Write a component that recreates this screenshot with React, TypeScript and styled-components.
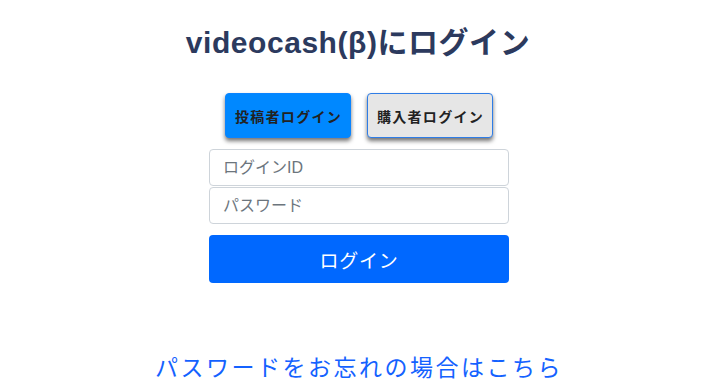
import React, { useState } from 'react';
import styled, { createGlobalStyle } from 'styled-components';

const GlobalStyle = createGlobalStyle`
  html, body {
    margin: 0;
    padding: 0;
    background: #ffffff;
  }
  body {
    font-family: 'Liberation Sans', 'Noto Sans CJK JP', sans-serif;
  }
  * {
    box-sizing: border-box;
  }
`;

const Page = styled.main`
  display: flex;
  flex-direction: column;
  align-items: center;
  padding: 22px 0 0 2px;
`;

const Title = styled.h1`
  margin: 0 2px 0 0;
  font-size: 30px;
  line-height: 42px;
  font-weight: 700;
  color: #2c3a5e;
  letter-spacing: 0.55px;
`;

const RoleSwitch = styled.div`
  display: flex;
  gap: 16px;
  margin-top: 29px;
`;

const RoleButton = styled.button<{ $active?: boolean }>`
  width: 126px;
  height: 45px;
  border-radius: 4px;
  border: 1px solid ${(p) => (p.$active ? '#0a84ff' : '#2f7de6')};
  background: ${(p) => (p.$active ? '#0088ff' : '#e6e6e6')};
  color: #222222;
  font-family: 'Liberation Sans', 'Noto Sans CJK JP', sans-serif;
  font-size: 14px;
  font-weight: 700;
  letter-spacing: 1.3px;
  padding: 0 0 0 1px;
  box-shadow: 0 3px 4px rgba(0, 0, 0, 0.55);
  cursor: pointer;
`;

const Form = styled.form`
  display: flex;
  flex-direction: column;
  width: 300px;
  margin-top: 11px;
`;

const Field = styled.input`
  height: 37px;
  margin-bottom: 1px;
  padding: 0 13px;
  border: 1px solid #ced4da;
  border-radius: 4px;
  font-family: 'Liberation Sans', 'Noto Sans CJK JP', sans-serif;
  font-size: 16px;
  color: #495057;
  &::placeholder {
    color: #6c757d;
  }
`;

const SubmitButton = styled.button`
  height: 48px;
  margin-top: 10px;
  border: none;
  border-radius: 4px;
  background: #0068ff;
  color: #ffffff;
  font-family: 'Liberation Sans', 'Noto Sans CJK JP', sans-serif;
  font-size: 19px;
  letter-spacing: 0.7px;
  cursor: pointer;
`;

const ForgotLink = styled.a`
  margin-top: 70px;
  font-size: 23px;
  line-height: 30px;
  letter-spacing: 2.5px;
  color: #1462ff;
  text-decoration: none;
`;

const App: React.FC = () => {
  const [role, setRole] = useState<'creator' | 'buyer'>('creator');

  return (
    <>
      <GlobalStyle />
      <Page>
        <Title>videocash(β)にログイン</Title>
        <RoleSwitch>
          <RoleButton $active={role === 'creator'} onClick={() => setRole('creator')}>
            投稿者ログイン
          </RoleButton>
          <RoleButton $active={role === 'buyer'} onClick={() => setRole('buyer')}>
            購入者ログイン
          </RoleButton>
        </RoleSwitch>
        <Form onSubmit={(e) => e.preventDefault()}>
          <Field type="text" placeholder="ログインID" />
          <Field type="password" placeholder="パスワード" />
          <SubmitButton type="submit">ログイン</SubmitButton>
        </Form>
        <ForgotLink href="#">パスワードをお忘れの場合はこちら</ForgotLink>
      </Page>
    </>
  );
};

export default App;
